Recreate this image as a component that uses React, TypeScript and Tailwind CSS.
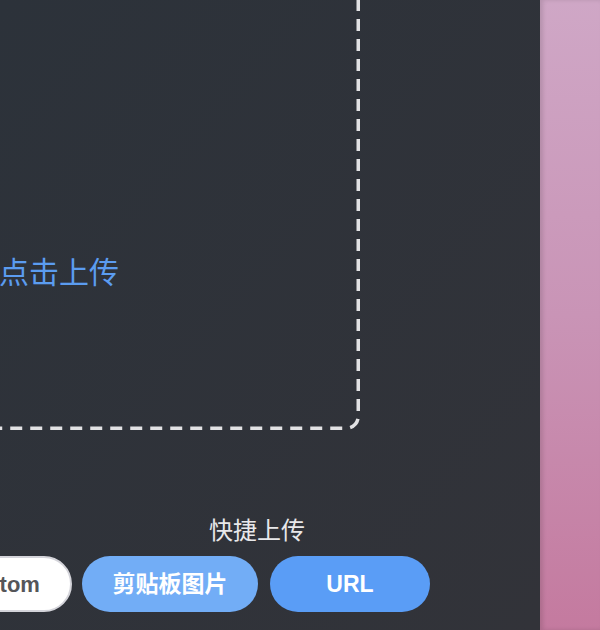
export default function App() {
  return (
    <div className="flex h-[630px] w-[600px] overflow-hidden font-['Inter','Noto_Sans_CJK_SC',sans-serif]">
      {/* Upload panel */}
      <div className="flex w-[540px] shrink-0 flex-col bg-gradient-to-br from-[#2c323a] to-[#323339]">
        <div className="relative -ml-[512px] -mt-[20px] flex h-[450px] w-[872px] shrink-0 justify-center pt-[274px]">
          {/* dashed drop-zone outline */}
          <svg className="pointer-events-none absolute inset-0" width="872" height="450" fill="none">
            <path
              d="M870.25 1.75 V436.25 A12 12 0 0 1 858.25 448.25 H1.75 V1.75 Z"
              stroke="#e2e2e4"
              strokeWidth="3.5"
              strokeDasharray="12 8"
              strokeDashoffset="2.75"
            />
          </svg>
          <span className="whitespace-nowrap text-[30px] leading-[36px] text-[#5b9cf0]">
            拖拽图片到此处，或点击上传
          </span>
        </div>

        <div className="ml-[209px] mt-[86px] text-[24px] leading-[30px] text-[#e8e8ea]">快捷上传</div>

        <div className="-ml-[68px] mt-[10px] flex items-center">
          <button className="h-[56px] w-[140px] shrink-0 rounded-full border-2 border-[#d4d4da] bg-white pr-[6px] font-['Liberation_Sans',sans-serif] text-[22px] font-bold text-[#555659]">
            Custom
          </button>
          <button className="ml-[10px] h-[56px] w-[176px] shrink-0 rounded-full bg-[#72adf6] text-[23px] font-bold text-white">
            剪贴板图片
          </button>
          <button className="ml-[12px] h-[56px] w-[160px] shrink-0 rounded-full bg-[#5a9df6] font-['Liberation_Sans',sans-serif] text-[23px] font-bold text-white">
            URL
          </button>
        </div>
      </div>

      {/* Background peek */}
      <div className="flex-1 bg-gradient-to-b from-[#cfa7c6] via-[#c994b6] to-[#c47a9f] shadow-[inset_3px_0_4px_rgba(0,0,0,0.12)]" />
    </div>
  );
}
